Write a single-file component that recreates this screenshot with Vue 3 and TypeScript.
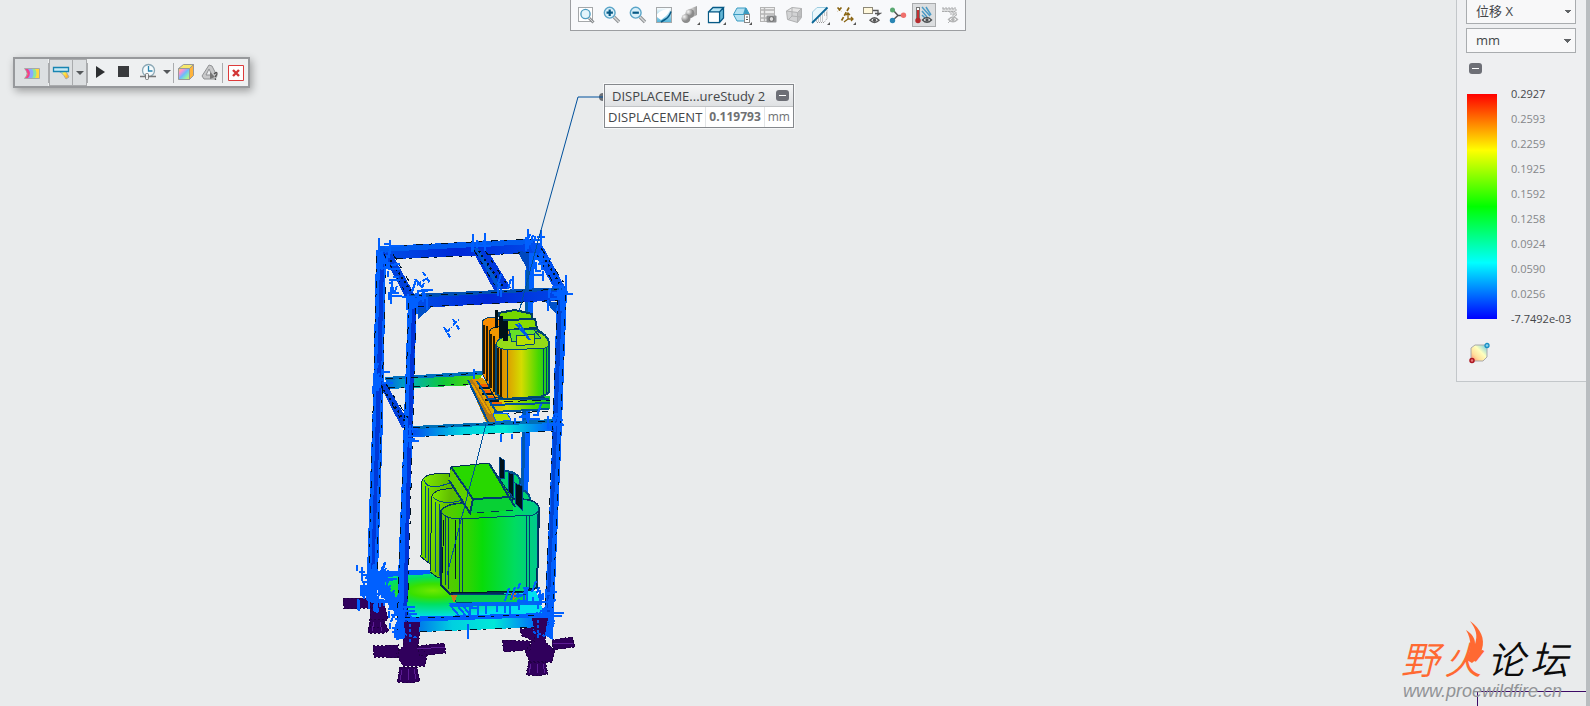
<script setup lang="ts">
import { ref } from 'vue'

interface Tool {
  label: string
  art: string
  menu?: boolean
  pressed?: boolean
}

const lens = (sign: string) =>
  `<path d="M12 12l5 5" stroke="#8d9093" stroke-width="3.4"/><path d="M12 12l5 5" stroke="#d5d7d8" stroke-width="1.4"/><circle cx="7.7" cy="7.7" r="5.4" fill="#d9f0fa" stroke="#5aa5c8" stroke-width="1.4"/><path d="${sign}" stroke="#075a86" stroke-width="2.2"/>`
const eye = (x: number, y: number, c: string) =>
  `<g transform="translate(${x} ${y})"><path d="M-4.5 0Q0-5 4.5 0Q0 4.5-4.5 0z" fill="#fff" stroke="${c}" stroke-width="1.4"/><circle r="1.7" fill="${c}"/></g>`

const viewTools: Tool[] = [
  { label: 'Refit', art: '<rect x="2.5" y="2.5" width="14" height="14" fill="#fff" stroke="#a5a8aa"/><path d="M13 13l4.500 4.500" stroke="#8d9093" stroke-width="3"/><path d="M13 13l4 4" stroke="#d5d7d8"/><circle cx="9.500" cy="9" r="4.600" fill="#e2f4fb" stroke="#4d9cc0" stroke-width="1.400"/>' },
  { label: 'Zoom in', art: lens('M4.500 7.700h6.400M7.700 4.500v6.400') },
  { label: 'Zoom out', art: lens('M4.500 7.700h6.400') },
  { label: 'Repaint', art: '<rect x="2.500" y="2.500" width="15" height="15" fill="url(#tb-blue)" stroke="#a5a8aa"/><path d="M3 12V9Q8 4 16 4Q15 8 12 11L7 15z" fill="#fff"/><path d="M17 6.500q-2 6-6 8l-4 2.500" fill="none" stroke="#075a86" stroke-width="1.500"/>' },
  { label: 'Rendering options', menu: true, art: '<path d="M9 4l8-3v9l-6 3z" fill="url(#tb-grey)"/><circle cx="10" cy="8.500" r="4.500" fill="url(#tb-ball)"/><circle cx="6" cy="13.500" r="4.500" fill="url(#tb-ball)"/>' },
  { label: 'Display style', menu: true, art: '<path d="M2.500 7L7 2.500h10.500L13.500 7z" fill="#b8e6f5"/><path d="M13.500 7l4-4.500v10.500l-4 4.500z" fill="#63b6d5"/><path d="M2.500 7h11v10.500h-11zM2.500 7L7 2.500h10.500L13.500 7M17.500 2.500V13l-4 4.500" fill="none" stroke="#075a86" stroke-width="1.300"/><path d="M3.200 7.700h9.500v9h-9.500z" fill="#fff"/>' },
  { label: 'Saved orientations', menu: true, art: '<path d="M1.500 9.500L5 3h9l3.500 6.500L14 16H5z" fill="#b4e1f2" stroke="#3b9bc1"/><path d="M1.500 9.500h12" stroke="#3b9bc1"/><path d="M13 3h1l3.500 6.500H11z" fill="#3b9bc1"/><rect x="12.500" y="9.500" width="5" height="8" fill="#fff" stroke="#888"/><path d="M14 12h2M14 14.500h2" stroke="#555"/>' },
  { label: 'View manager', art: '<rect x="2.500" y="2.500" width="14" height="14" fill="#eee" stroke="#b4b4b4"/><path d="M3 5h13M3 9h13M3 13h13M6.500 3v13" stroke="#b4b4b4" stroke-width="1.400"/><rect x="8.500" y="10.500" width="10" height="7" rx="1" fill="#8e9092"/><circle cx="13.500" cy="14" r="2.400" fill="#ddd" stroke="#666"/>' },
  { label: 'Perspective view', art: '<path d="M2.500 6L8 2.500l9.500 1-4 4z" fill="#e5e5e5"/><path d="M2.500 6l11 1.500v10l-10-3z" fill="#d2d3d4"/><path d="M13.500 7.500l4-4v9l-4 5z" fill="#bdbebf"/><path d="M2.500 6L8 2.500l9.500 1-4 4zl1 8.500 10 3v-10M17.500 3.500v9l-4 5M8 3v8l9 1M8 11l-4 4" fill="none" stroke="#b0b1b2"/>' },
  { label: 'Section', menu: true, art: '<path d="M2.500 7L7 2.500h10L2.500 17z" fill="#e9f7fc" stroke="#9dcce0"/><path d="M6 16h8M8 14h6M10 12h4M12 10h5M14 8h3M7 17.500h7l3-4V5" fill="none" stroke="#999" stroke-dasharray="1 1"/><path d="M2 18L17.500 2.500" stroke="#0a6696" stroke-width="1.800"/>' },
  { label: 'Datum display', menu: true, art: '<path d="M1.500 2.500l4 4m0-4l-4 4M13 2.500l-8 14" stroke="#8a6513" stroke-width="1.700" stroke-dasharray="4 1.500"/><path d="M12 8v6h5M12 14l-4 3M10 10l2-2 2 2M15 12l2 2-2 2" fill="none" stroke="#8a6513" stroke-width="1.300"/>' },
  { label: 'Annotation display', art: '<rect x="1.500" y="2.500" width="9" height="6" fill="#fff8dc" stroke="#8d8877"/><path d="M11 5.500h5v4M13 8.500h5l-3 2" fill="none" stroke="#555" stroke-width="1.300"/>' + eye(12.5, 15.3, '#555') },
  { label: 'Spin center', art: '<path d="M5 5l5 5.500M5 15l5-4.500h5" fill="none" stroke="#555" stroke-width="1.500"/><circle cx="4.500" cy="5" r="2.500" fill="#5aa871"/><circle cx="15.500" cy="10.300" r="2.700" fill="#ef706c"/><circle cx="4.500" cy="15.500" r="2.700" fill="#2a86b4"/>' },
  { label: 'Result display', pressed: true, art: '<rect x="2.500" y="2.500" width="3" height="12" fill="#fff" stroke="#777"/><path d="M4 5v10" stroke="#c33032" stroke-width="2"/><circle cx="4" cy="15.500" r="2.700" fill="#b52b2e"/><path d="M8 2l8 9M8 6l5 6M12 2l5 8M8 10l3 3" stroke="#4c9bc5" stroke-width="1.500"/>' + eye(13, 15, '#4d5052') },
  { label: 'Simulation display', art: '<path d="M2 3h14v9l-6-5H2z" fill="#dedfe0"/><path d="M2 3h14v8M2 6.500h13M4 3v4M7 3v4M10 3v6M13 3v8M10 9h6" fill="none" stroke="#acadae" stroke-dasharray="2 1"/>' + eye(13, 14.5, '#b4b5b6') + '<path d="M8 18L17 9" stroke="#b4b5b6"/>' },
]

const scale = ['0.2927', '0.2593', '0.2259', '0.1925', '0.1592', '0.1258', '0.0924', '0.0590', '0.0256', '-7.7492e-03']
const component = ref('位移 X')
const unit = ref('mm')

/* Short strokes scattered around a joint, as drawn for bonded contact markers. */
function burst(x: number, y: number, w: number, h: number, n: number, seed: number): string {
  let s = seed
  const rnd = () => {
    s = (s * 16807) % 2147483647
    return s / 2147483647
  }
  rnd()
  let d = ''
  for (let i = 0; i < n; i++) {
    const px = Math.round(x + rnd() * w)
    const py = Math.round(y + rnd() * h)
    const len = Math.round(4 + rnd() * 9)
    const k = Math.floor(rnd() * 5)
    d += `M${px} ${py}` + (k < 2 ? `h${len}` : k < 4 ? `v${len}` : `l${Math.round(len / 3)} ${-len}`)
  }
  return d
}

const contacts = [
  burst(378, 244, 12, 26, 14, 211), burst(388, 262, 6, 36, 16, 57), burst(472, 238, 12, 8, 6, 99),
  burst(524, 236, 14, 10, 10, 381), burst(533, 250, 10, 34, 18, 731), burst(402, 288, 26, 16, 22, 643),
  burst(548, 282, 16, 22, 20, 919), burst(371, 372, 12, 14, 12, 47), burst(402, 420, 10, 22, 12, 307),
  burst(548, 412, 10, 14, 12, 117), burst(357, 564, 28, 38, 56, 1201), burst(388, 604, 22, 28, 34, 877),
  burst(534, 592, 20, 40, 44, 2203), burst(368, 570, 22, 40, 26, 3307), burst(496, 284, 14, 6, 5, 503),
  burst(504, 414, 34, 6, 7, 1409), burst(466, 598, 62, 8, 12, 1511), burst(514, 588, 26, 12, 14, 1777),
].join('')

const frameEdges =
  'M391 246L532 239M396 259L472 256M488 255L534 252M384 254L409 299M393 254L416 293M474 250L497 289M484 249L508 286M541 248L566 286M536 253L558 291M416 296L564 289M417 307L566 300M377 256L369 566M386 262L377 572M409 302L397 630M416 308L407 632M566 294L552 630M558 298L545 618M386 379L482 373M388 388L468 384M413 428L554 421M413 437L553 431M379 382L405 426M386 384L410 421M403 618L543 615M420 632L540 627'
</script>

<template>
  <main class="app">
    <section class="viewport" aria-label="Simulation view">
      <svg class="model" width="620" height="706" viewBox="0 0 620 706" role="img" aria-label="Displacement of the cabinet frame">
        <defs>
          <linearGradient id="tb-blue" x2="0" y2="1"><stop stop-color="#fff" /><stop offset="1" stop-color="#4fb2d8" /></linearGradient>
          <linearGradient id="tb-grey"><stop stop-color="#eee" /><stop offset="1" stop-color="#999" /></linearGradient>
          <radialGradient id="tb-ball" cx=".3" cy=".3"><stop stop-color="#f4f4f4" /><stop offset="1" stop-color="#8b8b8b" /></radialGradient>
          <linearGradient id="rainbow" x2="1" y2=".4"><stop stop-color="#ff5a4e" /><stop offset=".25" stop-color="#f7c" /><stop offset=".45" stop-color="#79d7f5" /><stop offset=".7" stop-color="#fff04a" /><stop offset="1" stop-color="#ffb52a" /></linearGradient>
          <linearGradient id="cube-face" x2="1" y2="1"><stop stop-color="#ffe14a" /><stop offset=".25" stop-color="#ff8fd0" /><stop offset=".5" stop-color="#6fb8ff" /><stop offset=".75" stop-color="#8bf0b0" /><stop offset="1" stop-color="#ffe14a" /></linearGradient>
          <linearGradient id="beam"><stop stop-color="#0050e8" /><stop offset=".5" stop-color="#0028d8" /><stop offset="1" stop-color="#0048e8" /></linearGradient>
          <linearGradient id="midback"><stop stop-color="#0060e8" /><stop offset=".25" stop-color="#00b0b8" /><stop offset=".6" stop-color="#10c838" /><stop offset="1" stop-color="#60dc00" /></linearGradient>
          <linearGradient id="midfront"><stop stop-color="#0050f0" /><stop offset=".35" stop-color="#00d0e0" /><stop offset=".65" stop-color="#00e8d8" /><stop offset="1" stop-color="#0058ff" /></linearGradient>
          <linearGradient id="hot"><stop stop-color="#e88400" /><stop offset=".22" stop-color="#dca000" /><stop offset=".48" stop-color="#d4dc00" /><stop offset=".8" stop-color="#48d800" /><stop offset="1" stop-color="#10c830" /></linearGradient>
          <linearGradient id="cool"><stop stop-color="#60c800" /><stop offset=".2" stop-color="#44d000" /><stop offset=".42" stop-color="#08dc08" /><stop offset=".75" stop-color="#00dc60" /><stop offset="1" stop-color="#00c890" /></linearGradient>
          <linearGradient id="lime" x2="1" y2=".3"><stop stop-color="#84f000" /><stop offset=".5" stop-color="#60bc00" /><stop offset="1" stop-color="#38d000" /></linearGradient>
          <radialGradient id="floor" cx=".36" cy=".4" r=".55"><stop stop-color="#70e800" /><stop offset=".25" stop-color="#38e000" /><stop offset=".5" stop-color="#00e060" /><stop offset="1" stop-color="#00e0f0" /></radialGradient>
        </defs>
        <g shape-rendering="crispEdges">
          <!-- feet behind the base -->
          <g fill="#30005c" stroke="#210044" stroke-dasharray="2 2">
            <path d="M343 598h26l3 4v6l-28 1zM370 602h14l4 16-7 9H370zM370 619h13l6 12-5 2h-16z" />
            <path d="M403 624h18l-3 22 9 8-2 12h-22l-7-12 7-8zM373 646l25-1v13l-24-1zM417 646l27-3 2 10-26 3zM400 667h17l3 14-10 2-13-1z" />
            <path d="M531 618h18l-4 24 10 8-3 12h-22l-5-10 6-9zM502 640l28 1v9l-26 2zM552 640l20-3 3 10-22 3zM529 661h16l3 13-10 2-12-1z" />
            <path d="M520 629l14-2v14l-12-5z" />
          </g>
          <path d="M417 649l28-2M553 644l20-1M402 670l-2 10M408 669v11M414 669l2 10M531 664l-2 9M537 664v9M543 664l2 9M374 622l-2 9M380 622l2 9" stroke="#5c1c94" fill="none" />

          <!-- base plate -->
          <path d="M370 573L430 571 536 591 545 616 412 620z" fill="url(#floor)" />
          <path d="M370 571L430 570v4l-60 4zM366 575l10-2 38 46-10 6z" fill="#0060ff" />
          <path d="M403 620L543 616v11l-123 5z" fill="url(#midfront)" />
          <path d="M403 617L543 613v4l-136 5z" fill="#0060ff" />

          <!-- rear frame -->
          <path d="M376 250L386 250 383 420 377 605 366 600 373 400z" fill="#0060ff" />
          <path d="M380 262L384 262 380 420 374 580 371 580 376 410z" fill="#0038d8" />
          <path d="M526 250h9l-7 250h-8z" fill="#0060ff" />
          <path d="M526 270h3l-5 220h-3z" fill="#0058b0" />
          <path d="M380 248L535 239v14L394 259z" fill="url(#beam)" />
          <path d="M380 246L533 239v5L380 252z" fill="#005cf0" />
          <path d="M471 248h15l25 40-17 2z" fill="#0038dc" />
          <path d="M474 248h4l24 40h-5z" fill="#0058d0" />
          <path d="M528 243h13l25 46-9 4z" fill="#0050f0" />
          <path d="M517 250l12 3v20z" fill="#0048c0" />
          <path d="M385 378L483 373l-6 12-89 4z" fill="url(#midback)" />
          <path d="M385 377L483 371v4l-98 5z" fill="#0070c0" />

          <!-- upper platform and unit -->
          <path d="M468 380l14-2 24 20 44-2v13l-55 4-3 12h-5z" fill="url(#hot)" />
          <path d="M468 381l4-2 25 43-9 1z" fill="#b07818" />
          <path d="M472 384l18 30" stroke="#e8a000" stroke-width="2" />
          <path d="M480 385h13M483 391h14M486 397h12M490 403h12" stroke="#f26000" stroke-width="3" />
          <path d="M479 388h18M482 394h18M485 400h14" stroke="#00182c" stroke-width="2" />
          <path d="M468 380l20 42M477 381l25 40M488 399h61M490 405l60-2M494 412l55-3" stroke="#00509c" fill="none" stroke-width="2" />
          <path d="M490 402l60-2M500 414l48-3" stroke="#001828" stroke-dasharray="9 5" />
          <path d="M493 414l14-1 4 7-15 2z" fill="#b4e000" stroke="#0060ff" />
          <path d="M482 322q2-5 13-5l14 10v68l-13 5-14-27z" fill="#f88c00" stroke="#003f70" />
          <path d="M489 332q3-7 18-6v70l-12 2-6-11z" fill="#f19800" stroke="#002840" />
          <path d="M496 345q2-8 18-11l22-5q12 6 13 14v49q-4 5-13 5l-32 2-8-5z" fill="url(#hot)" stroke="#004878" stroke-width="2" />
          <path d="M496 345q4 5 14 5l35-2q4-1 4-5-2-8-13-12l-22 4q-17 2-18 10z" fill="#94dc18" stroke="#004878" />
          <path d="M498 313l17-3 17 4v7l-30 2z" fill="#74d800" stroke="#003c64" stroke-width="2" />
          <path d="M503 320l32-1 2 9-31 2z" fill="#88dc00" stroke="#003c64" stroke-width="2" />
          <path d="M509 329h24l8 9-29 4z" fill="#66e028" stroke="#004878" />
          <path d="M516 336l18-2v10l-18 2z" fill="#b8e000" stroke="#004878" />
          <path d="M516 324l14 16M519 323l10 16" stroke="#0058e8" stroke-width="2" />
          <path d="M495 310h3v18h-3zM499 316h4v22h-4zM503 321h5v20h-5z" fill="#001018" />
          <path d="M484 325v49M487 326v55M491 334v54M494 336v56M498 348v46M501 349v48" stroke="#281c00" stroke-width="2" />
          <path d="M507 350v48M543 349v46M546 348v46M497 397l10 3 38-3" stroke="#00406c" fill="none" />

          <!-- lower unit -->
          <path d="M500 471q15-1 20 8l-1 11q10 0 11 9v12h-30z" fill="#00d070" stroke="#00508c" stroke-width="2" />
          <path d="M422 481q2-6 12-7l22-1 16 34-20 56h-23l-8-6z" fill="url(#lime)" stroke="#002d58" />
          <path d="M424 480q2 7 12 7l15-4M425 486v72M428 488v74" stroke="#004a88" fill="none" />
          <path d="M432 496q2-6 14-7l13-2 11 20-13 70h-20l-7-5z" fill="url(#lime)" stroke="#002d58" />
          <path d="M433 497q6 7 21 5l10-2M435 502v70M439 504v72" stroke="#004a88" fill="none" />
          <path d="M441 511q4-7 26-8l48-4q22 0 24 9l-2 80-14 4-73 2-9-9z" fill="url(#cool)" stroke="#002d58" stroke-width="2" />
          <path d="M441 511q3 8 20 8l72-4q6-2 6-7-2-9-24-9l-48 4q-22 1-26 8z" fill="url(#cool)" stroke="#003f74" />
          <path d="M451 467L489 463 512 497 513 510 470 513 449 481z" fill="#28d800" stroke="#002d58" />
          <path d="M451 467L473 499l-3 14-21-33z" fill="#5ed000" />
          <path d="M473 499l39-2 1 13-43 3z" fill="#08d034" />
          <path d="M451 467L473 499 470 513 449 480M473 499l39-2M489 463l26 44" stroke="#003c70" stroke-width="2" fill="none" />
          <path d="M445 515v70M448 517v72M459 518v75M462 518v74M526 516v74M529 516v73M537 514v70" stroke="#003c70" fill="none" />
          <path d="M444 520l-2 54M456 520l-1 60M451 593l72-2M525 588h10" stroke="#001828" fill="none" />
          <path d="M499 457l5 3v18h-5zM508 472l5 2v23l-5-6zM515 483l7 3v24l-6-6z" fill="#001018" stroke="#00468c" />
          <path d="M453 594h73v8h-70z" fill="#08d050" stroke="#00407c" />
          <path d="M451 595h6l-2 7h-2zM511 593h5v5l-3 2z" fill="#c47c1c" />
          <path d="M449 603l91-2v4l-89 2z" fill="#0068f0" />
          <path d="M450 605l10 12M456 604l10 12M462 604l8 11M470 608h8v8h-8z" stroke="#0060ff" fill="none" stroke-width="2" />

          <!-- front frame -->
          <path d="M382 252l10 2 24 43-9 4zM377 380l8 2 26 44-9 2z" fill="#0040dc" />
          <path d="M413 428L554 421v10l-141 6z" fill="url(#midfront)" />
          <path d="M413 426L554 419v4l-141 6z" fill="#0070b8" />
          <path d="M410 296L565 288v12l-148 8z" fill="url(#beam)" />
          <path d="M410 294L566 287v3l-156 8z" fill="#0050b4" />
          <path d="M408 298h9l-5 152-4 100-2 88-10 2 3-90 4-100z" fill="#0060ff" />
          <path d="M412 308h4l-5 150-4 165h-4l4-160z" fill="#0034d8" />
          <path d="M557 290h10l-6 160-4 90-4 100-10-6 5-90 4-98z" fill="#0060ff" />
          <path d="M558 300h4l-6 158-4 92-3 75h-3l5-125z" fill="#0044d4" />
          <path d="M418 308l14-1-14 12zM557 302l-12-1 11 13z" fill="#0050c8" />
          <path :d="frameEdges" fill="none" stroke="#001224" stroke-dasharray="7 6 3 9" />
          <path d="M388 256l25 39M479 251l24 36M543 256l18 30M381 386l25 37" fill="none" stroke="#001224" stroke-width="2" stroke-dasharray="2 3" />
          <path :d="contacts" fill="none" stroke="#0060ff" stroke-width="2" />
          <path d="M379 238v20M384 244h6M390 240v14M473 234v18M485 233v18M528 229v20M541 230v16M566 275v18M513 276v14M468 624v15M501 434v8M512 434v5M474 369v10" stroke="#0060ff" stroke-width="2" />
          <path d="M415 279l7 8M423 272l7 11M417 285l10-7M444 327l7 12M453 319l7 12M446 332l6-4M453 325l6-5" stroke="#0060ff" stroke-width="2" stroke-dasharray="5 2" />
          <path d="M404 622h16l-2 22h-12zM532 618h16l-4 22h-8z" fill="#30005c" />
          <path d="M404 634l14 4M533 632l12 4M410 624v18M538 620v20" stroke="#0058f0" stroke-dasharray="3 2" stroke-width="2" />
          <path d="M540 234L519 312M486 424L477 460 468 493 447 575" fill="none" stroke="#00509c" />
        </g>
        <circle cx="603" cy="97" r="4" fill="#6d7076" />
        <path d="M603 97H578L540 234" fill="none" stroke="#00509c" />
      </svg>

      <div class="view-tools" role="toolbar" aria-label="View">
        <button v-for="tool in viewTools" :key="tool.label" class="tool" :class="{ pressed: tool.pressed }" type="button" :aria-label="tool.label">
          <svg width="20" height="20" viewBox="0 0 20 20" fill="none" aria-hidden="true">
            <g v-html="tool.art" />
            <path v-if="tool.menu" d="M20 17v3h-3z" fill="#555" />
          </svg>
        </button>
      </div>

      <div class="play-tools" role="toolbar" aria-label="Animation">
        <button class="shaded wide" type="button" aria-label="Fringe">
          <svg width="18" height="14" viewBox="0 0 18 14"><path d="M1.500 2.500h15v10h-15q5-5 0-10z" fill="#ffd93c" stroke="#a5a8aa" /><path d="M2 3h10q3 4 0 9H3q5-4-1-9z" fill="#8be6a0" /><path d="M2 3h7q3 4 0 9H3q5-4-1-9z" fill="#8aa8ff" /><path d="M2 3h3q4 4 0 9H2q5-4 0-9z" fill="#f2418b" /></svg>
        </button>
        <span class="rule"></span>
        <button class="shaded boxed" type="button" aria-label="Deformed">
          <svg width="18" height="16" viewBox="0 0 18 16"><path d="M3 5q7 1 11 9l3-2q-2-5-6-8z" fill="url(#rainbow)" stroke="#aaa" /><path d="M1.500 2.500h15v4h-15z" fill="#c6eaf5" stroke="#1885b2" stroke-width="1.300" /></svg>
        </button>
        <button class="shaded drop" type="button" aria-label="Deformed options"><i class="caret"></i></button>
        <span class="rule"></span>
        <button class="plain" type="button" aria-label="Play">
          <svg width="14" height="14" viewBox="0 0 14 14"><path d="M3 1l9 6-9 6z" fill="#2d2f31" /></svg>
        </button>
        <button class="plain" type="button" aria-label="Stop">
          <svg width="14" height="14" viewBox="0 0 14 14"><path d="M1 1h11v11H1z" fill="#393b3d" /></svg>
        </button>
        <button class="plain" type="button" aria-label="Speed">
          <svg width="18" height="18" viewBox="0 0 18 18" fill="none"><circle cx="9.500" cy="7.500" r="6" fill="#f4fafc" stroke="#8ba8b5" stroke-width="1.300" /><path d="M9.500 3v5h4" stroke="#2986b0" stroke-width="1.300" /><path d="M1 13.500h16" stroke="#777" stroke-width="1.500" /><rect x="6.500" y="10.500" width="3" height="6" rx="1" fill="#eee" stroke="#777" /></svg>
        </button>
        <button class="plain narrow" type="button" aria-label="Speed options"><i class="caret"></i></button>
        <span class="rule"></span>
        <button class="plain" type="button" aria-label="Legend cube">
          <svg width="18" height="18" viewBox="0 0 18 18"><path d="M1.500 5.500l5-4h10l-4 4z" fill="#f6e86a" stroke="#999" /><path d="M12.500 5.500l4-4v11l-4 4z" fill="#ffb43c" stroke="#999" /><path d="M1.500 5.500h11v11h-11z" fill="url(#cube-face)" stroke="#999" /></svg>
        </button>
        <button class="plain" type="button" aria-label="Mesh query">
          <svg width="18" height="18" viewBox="0 0 18 18" fill="none"><path d="M8 2l3 1 5 10-2 3H3l-2-3zM8 6l3 6H5z" fill="#c8c9ca" fill-rule="evenodd" stroke="#909294" /><path d="M9 9l5 5-5 2z" fill="#777" /><path d="M13 11q3-3 3 0 0 1-1.500 2v1M14.500 15.500V17" stroke="#555" stroke-width="1.300" /></svg>
        </button>
        <span class="rule"></span>
        <button class="plain close" type="button" aria-label="Close">
          <svg width="16" height="16" viewBox="0 0 16 16"><path d="M.5.5h15v15H.5z" fill="#fff" stroke="#dd3b3b" /><path d="M5 5l6 6m0-6l-6 6" stroke="#d33737" stroke-width="2.400" /></svg>
        </button>
      </div>

      <article class="callout">
        <header><span>DISPLACEME...ureStudy 2</span><button class="fold" type="button" aria-label="Collapse result"></button></header>
        <div class="reading"><span>DISPLACEMENT</span><b>0.119793</b><span class="unit">mm</span></div>
      </article>

      <div class="sheet"></div>
      <div class="mark">
        <div class="mark-name"><span class="fire">野</span><span class="fire">火</span><span>论</span><span>坛</span></div>
        <svg class="flame" width="22" height="44" viewBox="0 0 22 44" aria-hidden="true"><path d="M7 0C18 8 22 18 19 28 17 37 12 39 9 42L2 38C9 31 9 19 3 9 9 13 12 17 12 23 15 14 13 8 7 0z" fill="#ff6932" /></svg>
        <div class="mark-url">www.proewildfire.cn</div>
      </div>
    </section>

    <aside class="side">
      <div class="legend">
        <select v-model="component" aria-label="Component"><option>位移 X</option></select>
        <select v-model="unit" aria-label="Unit"><option>mm</option></select>
        <button class="fold" type="button" aria-label="Collapse legend"></button>
        <div class="scale">
          <div class="ramp"></div>
          <ol><li v-for="value in scale" :key="value">{{ value }}</li></ol>
        </div>
        <button class="extremes" type="button" aria-label="Minimum and maximum">
          <svg width="22" height="22" viewBox="0 0 22 22"><defs><linearGradient id="ext" x1="0" y1="1" x2="1" y2="0"><stop stop-color="#ff806c" /><stop offset=".3" stop-color="#ffdf9a" /><stop offset=".6" stop-color="#ffffbe" /><stop offset="1" stop-color="#69c9e8" /></linearGradient></defs><path d="M3 6l4-3h12v12l-4 4H3z" fill="url(#ext)" stroke="#aaa" /><circle cx="19" cy="3.500" r="2" fill="#8bd3ec" stroke="#168ec5" stroke-width="1.300" /><circle cx="4" cy="18.500" r="2" fill="#e67878" stroke="#ac1621" stroke-width="1.500" /></svg>
        </button>
      </div>
    </aside>
  </main>
</template>

<style>
body { margin: 0; }
</style>

<style scoped>
.app {
  display: flex;
  min-height: 100vh;
  box-sizing: border-box;
  border-right: 4px solid #b9bdc0;
  background: #e9ebec;
  color: #444649;
  font: 13px/20px "Open Sans", "Noto Sans CJK SC", sans-serif;
  overflow: hidden;
}
.viewport { position: relative; flex: 1; min-width: 0; }
.model { position: absolute; left: 0; top: 0; }
button { padding: 0; border: 0; background: none; box-sizing: border-box; display: flex; align-items: center; justify-content: center; }

.view-tools {
  position: absolute;
  top: 0;
  left: 80px;
  right: 0;
  width: max-content;
  margin: 0 auto;
  display: flex;
  gap: 2px;
  padding: 3px;
  border: 1px solid #9c9ea1;
  border-width: 0 1px 1px;
  background: #f8f9fb;
}
.tool { width: 24px; height: 24px; }
.tool.pressed { border: 1px solid #a9abad; background: #dcdee0; }

.play-tools {
  position: absolute;
  left: 13px;
  top: 57px;
  display: flex;
  align-items: center;
  height: 27px;
  border: 2px solid #97999c;
  background: #eef0f1;
  box-shadow: 2px 3px 8px #0005;
}
.play-tools .shaded { background: #dcdfe1; height: 27px; }
.play-tools .wide { width: 33px; }
.play-tools .boxed { width: 24px; border: 1px solid #a9abad; }
.play-tools .drop { width: 14px; border: 1px solid #a9abad; border-left: 0; }
.plain { width: 24px; height: 24px; padding-bottom: 2px; }
.play-tools .narrow { width: 13px; }
.play-tools .close { width: 25px; padding-bottom: 0; }
.rule { width: 1px; height: 20px; background: #aaacae; }
.caret { border: 4px solid transparent; border-top-color: #55585b; border-bottom: 0; }

.callout {
  position: absolute;
  left: 604px;
  top: 84px;
  border: 1px solid #85888c;
  outline: 1px solid #f6f7f8;
  background: #fff;
}
.callout header { display: flex; align-items: center; justify-content: space-between; height: 21px; padding: 0 4px 0 7px; background: linear-gradient(#f5f6f7, #dfe1e3); border-bottom: 1px solid #c2c4c6; }
.reading { display: flex; height: 20px; }
.reading > * { padding: 0 3px; }
.reading b { border: 1px solid #e2e4e6; border-width: 0 1px; color: #6f7173; font-size: 12px; }
.reading .unit { color: #707275; font-size: 12px; }
.fold { width: 13px; height: 11px; border-radius: 3px; background: #6d6f76; }
.fold::before { content: ""; width: 7px; height: 1px; background: #fff; }

.sheet { position: absolute; right: -130px; bottom: 0; width: 108px; height: 14px; border: 1px solid #3c0a66; border-width: 1px 0 0 1px; }
.mark { position: absolute; right: -112px; bottom: 5px; white-space: nowrap; font-style: italic; }
.mark-name { font: italic 350 38px/46px "Noto Sans CJK SC", sans-serif; display: flex; gap: 5px; color: #0c0c0c; }
.fire { color: #ff6932; }
.flame { position: absolute; left: 62px; top: -14px; }
.mark-url { padding-left: 2px; font: italic 18px/20px "Liberation Sans", Arial, sans-serif; color: #919396; }

.side { width: 130px; flex: none; }
.legend { display: flex; flex-direction: column; align-items: flex-start; gap: 4px; padding: 0 10px 17px 9px; border: 1px solid #c3c7ca; border-width: 0 0 1px 1px; background: #eeeff1; }
select {
  width: 100%;
  height: 25px;
  padding: 0 9px 2px;
  border: 1px solid #a9acaf;
  border-radius: 0;
  color: #444649;
  font: inherit;
  appearance: none;
  background: #f8f8f9 conic-gradient(from -45deg at 50% 100%, #606366 90deg, transparent 0) no-repeat right 3px top 9px / 8px 4px;
  background-image: conic-gradient(from 315deg at 50% 100%, #606366 90deg, transparent 0);
}
.legend select { background-image: linear-gradient(to bottom left, #606366 50%, transparent 50%), linear-gradient(to bottom right, #606366 50%, transparent 50%); background-size: 4px 4px; background-position: right 7px top 10px, right 3px top 10px; }
.legend select:first-child { height: 24px; border-top: 0; }
.legend .fold { margin: 6px 0 0 3px; }
.scale { display: flex; gap: 14px; margin-top: 3px; }
.ramp { width: 30px; height: 225px; margin: 13px 0 0 1px; background: linear-gradient(#f00, #ff0 25%, #0f0 50%, #0ff 75%, #00f); }
ol { margin: 0; padding: 0; list-style: none; font-size: 11px; line-height: 25px; color: #85878a; white-space: nowrap; }
li:first-child, li:last-child { color: #444649; }
.extremes { width: 22px; height: 22px; margin: 7px 0 0 2px; }
</style>
